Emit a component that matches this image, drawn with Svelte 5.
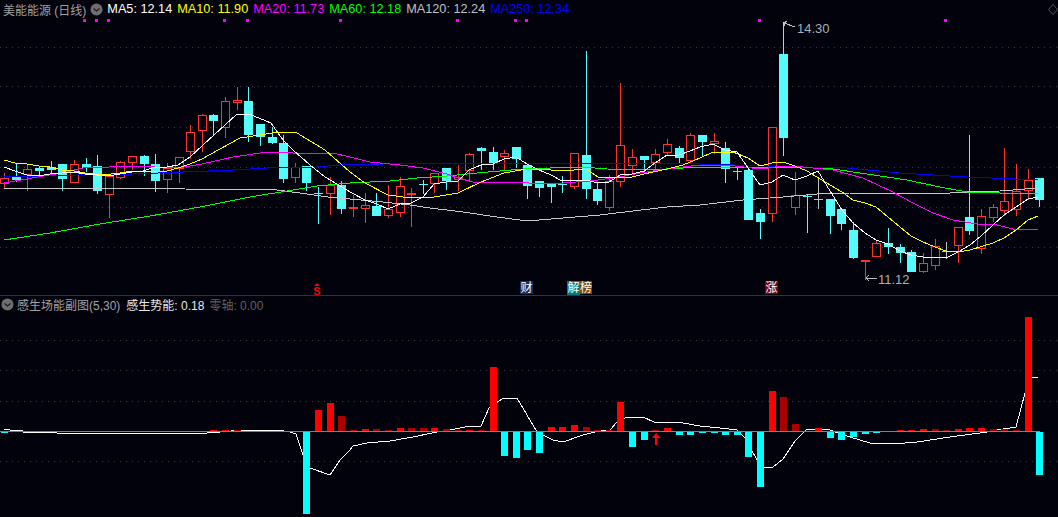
<script>
  // x pixel of the nth trading day
  const xAt = (i) => Math.floor(4.6 + i * 11.63)

  // [high, bodyTop, bodyBottom, low, kind]  r hollow, s solid red, c cyan, x cyan cross, g grey cross
  const candles = [
    [173,178,184,189,'r'],[163,176,180,182,'c'],[164,169,175,191,'r'],[167,168,171,175,'c'],[161,167,170,175,'c'],
    [164,164,179,191,'c'],[160,164,183,183,'r'],[158,164,168,172,'c'],[155,166,191,194,'c'],[174,176,195,218,'r'],
    [161,162,178,179,'r'],[156,156,163,170,'r'],[155,156,164,176,'c'],[154,164,181,192,'c'],[163,168,180,193,'r'],
    [157,157,169,183,'r'],[125,132,152,159,'r'],[114,115,131,152,'r'],[114,115,121,136,'c'],[97,101,128,138,'r'],
    [87,100,103,110,'r'],[87,101,135,142,'c'],[124,124,137,146,'c'],[127,137,143,144,'c'],[135,143,179,183,'c'],
    [163,167,178,183,'r'],[166,166,183,191,'c'],[187,193,193,224,'x'],[177,185,194,215,'r'],[181,185,209,214,'c'],
    [195,207,209,217,'r'],[193,205,209,223,'r'],[193,206,216,216,'c'],[185,209,216,218,'r'],[177,186,213,217,'r'],
    [188,193,195,227,'s'],[180,184,184,194,'x'],[173,173,184,193,'r'],[168,168,181,190,'c'],[165,177,180,191,'r'],
    [153,154,171,181,'r'],[147,148,151,170,'c'],[147,152,163,170,'c'],[150,153,157,170,'r'],[147,147,159,168,'c'],
    [163,165,186,199,'c'],[181,181,188,197,'c'],[184,184,187,203,'c'],[176,184,184,193,'x'],[153,153,187,189,'r'],
    [51,155,189,199,'c'],[182,189,201,205,'c'],[175,181,208,211,'r'],[83,145,182,187,'r'],[149,157,166,174,'r'],
    [156,156,160,172,'c'],[149,154,163,171,'r'],[139,144,153,156,'r'],[146,148,158,163,'c'],[133,135,161,163,'r'],
    [135,135,142,156,'c'],[133,141,144,154,'r'],[142,148,169,183,'c'],[165,171,171,180,'g'],[168,170,220,220,'c'],
    [209,213,222,239,'c'],[127,127,214,222,'r'],[22,54,138,156,'c'],[172,195,208,215,'r'],[194,196,196,233,'x'],
    [178,199,199,209,'g'],[199,199,216,234,'c'],[209,209,224,230,'c'],[222,230,258,259,'c'],[260,260,262,280,'s'],
    [240,243,257,257,'r'],[228,243,247,254,'c'],[244,247,253,263,'c'],[250,252,272,272,'c'],[253,263,272,273,'r'],
    [239,246,266,270,'r'],[242,251,251,259,'g'],[227,227,246,263,'r'],[135,217,231,235,'c'],[209,216,249,254,'r'],
    [204,207,218,222,'r'],[148,201,211,216,'r'],[164,191,210,216,'r'],[169,180,191,200,'r'],[178,178,200,207,'c']
  ]

  const lines = [
    { color: '#c8c8c8', pts: '4,188 138,188 185,189 277,190 300,193 328,197 350,199 383,202 410,205 430,208 463,212 490,216 527,221 563,218 600,215 633,211 667,207 700,205 743,200 783,197 817,194 850,193 950,193 967,192 1000,191 1038,188' },
    { color: '#00ff00', pts: '4,240 50,233 100,224 150,216 200,207 250,197 287,191 317,186 350,183 370,182 390,181 417,178 447,176 477,173 500,171 523,169 550,168 583,167 607,169 650,170 683,168 700,167 800,167 833,169 867,174 907,180 940,187 967,192 1000,193 1038,193' },
    { color: '#0000ff', pts: '4,177 77,175 133,174 183,172 233,170 267,168 317,167 350,164 383,164 417,163 683,163 700,164 800,167 847,168 900,173 967,177 1038,180' },
    { color: '#ff00ff', pts: '4,183 27,179 43,176 62,173 83,168 109,167 133,166 155,167 178,168 202,164 233,157 267,152 293,153 317,154 333,153 350,157 370,162 400,165 423,168 447,174 458,178 473,182 493,183 517,182 540,184 563,183 590,181 613,178 640,173 660,170 683,167 700,165 727,165 760,169 783,166 803,167 833,170 863,178 893,192 913,203 933,213 953,220 977,224 993,224 1017,230 1038,229' },
    { color: '#ffff00', pts: '4,160 15,163 27,164 39,166 50,167 62,170 74,171 85,173 95,174 103,175 120,173 132,171 143,171 155,171 167,171 178,168 190,164 202,159 220,149 240,138 260,135 278,132 297,133 325,150 350,172 365,183 388,195 411,198 434,197 458,193 481,182 504,173 527,169 551,170 562,171 586,169 598,177 620,178 632,177 644,174 667,169 683,165 700,158 713,152 733,152 748,158 760,166 772,163 783,162 795,166 807,171 830,185 842,192 853,200 865,203 876,207 888,217 900,227 911,236 923,242 935,247 946,251 958,252 970,250 993,243 1004,238 1016,230 1028,220 1038,216' },
    { color: '#ffffff', pts: '4,167 15,171 27,175 39,176 50,174 62,173 74,172 85,174 97,175 109,176 120,174 132,172 143,171 155,167 167,167 178,165 190,157 203,145 225,125 237,114 249,114 271,123 283,140 293,150 310,165 325,177 337,184 350,192 365,200 377,204 388,209 400,204 411,203 423,197 434,184 446,182 458,181 469,170 481,165 493,164 504,159 516,157 527,164 539,170 551,175 562,181 574,180 586,180 598,183 609,182 620,175 632,174 644,171 655,163 667,155 679,155 690,151 700,147 713,144 725,150 737,152 748,168 760,185 772,182 783,175 795,180 807,176 818,171 830,191 842,210 853,223 865,233 876,240 888,244 900,251 911,255 923,257 935,257 946,258 958,252 970,245 981,236 993,225 1004,215 1016,207 1028,199 1038,197' }
  ]

  const marks = [84, 96, 108, 224, 247, 340, 457, 515, 526, 759, 945]
  const topGrid = [47, 86, 127, 167, 207, 247]
  const subGrid = [340, 370, 401, 461]

  const zero = 431
  // [day, kind, end y]  r red, d dark red, c cyan
  const bars = [
    [0,'c',433],[1,'c',432],[2,'c',432],[3,'c',432],[9,'c',432],[18,'r',430],[19,'r',430],[20,'d',430],
    [23,'c',432],[24,'c',432],[25,'c',432],[26,'c',514],[27,'r',410],[28,'r',403],[29,'d',416],[30,'d',430],
    [31,'r',429],[32,'d',429],[33,'d',430],[34,'r',428],[35,'d',428],[36,'d',428],[37,'r',428],[38,'d',429],
    [39,'d',430],[40,'r',430],[41,'d',430],[42,'r',367],[43,'c',456],[44,'c',458],[45,'c',450],[46,'c',453],
    [47,'r',427],[48,'r',427],[49,'r',425],[50,'d',427],[51,'d',430],[52,'d',430],[53,'r',402],[54,'c',447],
    [55,'c',440],[56,'d',430],[57,'r',428],[58,'c',435],[59,'c',435],[60,'c',433],[61,'c',433],[62,'c',435],
    [63,'c',435],[64,'c',457],[65,'c',487],[66,'r',391],[67,'d',397],[68,'d',424],[70,'r',428],[71,'c',438],
    [72,'c',440],[73,'c',437],[74,'c',434],[75,'c',433],[77,'r',430],[78,'r',430],[79,'r',429],[80,'d',429],
    [81,'d',430],[82,'r',429],[83,'r',428],[84,'r',428],[85,'d',429],[86,'d',429],[87,'d',430],[88,'r',317],[89,'c',475]
  ]
  const barColor = { r: '#ff0000', d: '#aa0000', c: '#00ffff' }

  const energy = '4,429 10,430 22,430 23,432 43,432 57,433 207,433 220,432 243,430 278,430 290,432 296,434 303,455 310,468 330,475 340,460 350,450 353,446 367,443 390,441 413,437 437,432 450,430 465,427 481,426 489,408 502,399 517,398 527,415 537,432 553,440 563,442 583,435 595,432 603,430 610,430 617,422 625,418 643,417 654,422 683,423 700,426 720,428 737,430 745,438 757,460 763,468 773,467 783,459 795,441 807,429 827,429 838,433 850,437 870,443 893,444 917,442 950,437 987,432 997,430 1016,427 1025,393 1032,378 1038,377'

  const legend = [
    { label: 'MA5: 12.14', color: '#ffffff' },
    { label: 'MA10: 11.90', color: '#ffff00' },
    { label: 'MA20: 11.73', color: '#ff00ff' },
    { label: 'MA60: 12.18', color: '#00ff00' },
    { label: 'MA120: 12.24', color: '#c0c0c0' },
    { label: 'MA250: 12.34', color: '#0000ff' }
  ]
</script>

<div class="screen">
  <svg class="chart" width="1058" height="517" viewBox="0 0 1058 517">
    {#each topGrid as y}
      <line class="grid" x1="0" x2="1058" y1={y + 0.5} y2={y + 0.5} />
    {/each}
    {#each subGrid as y}
      <line class="grid" x1="0" x2="1058" y1={y + 0.5} y2={y + 0.5} />
    {/each}
    <rect class="divider" x="0" y="295" width="1058" height="1" />

    {#each marks as x}
      <rect class="mark" x={x - 1} y="19" width="3" height="3" />
    {/each}

    {#each candles as [high, top, bottom, low, kind], i}
      {@const x = xAt(i)}
      {#if kind === 'c'}
        <rect class="cyan" x={x} y={high} width="1" height={low - high} />
        <rect class="cyan" x={x - 4} y={top} width="9" height={bottom - top} />
      {:else if kind === 'x' || kind === 'g'}
        <rect class={kind === 'x' ? 'cyan' : 'grey'} x={x} y={high} width="1" height={low - high} />
        <rect class={kind === 'x' ? 'cyan' : 'grey'} x={x - 4} y={top} width="9" height="1" />
      {:else if kind === 's'}
        <rect class="red" x={x} y={high} width="1" height={low - high} />
        <rect class="red" x={x - 4} y={top} width="9" height={bottom - top} />
      {:else}
        <rect class="red" x={x} y={high} width="1" height={top - high} />
        <rect class="red" x={x} y={bottom} width="1" height={low - bottom} />
        <rect class="hollow" x={x - 3.5} y={top + 0.5} width="8" height={bottom - top - 1} />
      {/if}
    {/each}

    {#each lines as line}
      <polyline class="ma" stroke={line.color} points={line.pts} />
    {/each}

    <!-- high / low callouts -->
    <polyline class="callout" points="784,26 784,23 795,27" />
    <polyline class="callout" points="784,23 787,21" />
    <text class="price" x="797" y="33">14.30</text>
    <polyline class="callout" points="869,275 866,278 869,281" />
    <line class="callout" x1="866" y1="278" x2="877" y2="278" />
    <text class="price" x="878" y="284">11.12</text>

    <!-- event tags -->
    <polygon class="redfill" points="317,283 314,286 320,286" />
    <text class="tag s" x="317" y="295">S</text>
    <rect x="520" y="281" width="13" height="13" fill="#0a3264" />
    <text class="tag" x="526.5" y="292">财</text>
    <rect x="567" y="281" width="13" height="14" fill="#0a7878" />
    <text class="tag" x="573.5" y="292">解</text>
    <rect x="580" y="281" width="12" height="13" fill="#7c420a" />
    <text class="tag" x="586" y="292">榜</text>
    <rect x="765" y="281" width="13" height="13" fill="#780404" />
    <text class="tag" x="771.5" y="292">涨</text>

    <polyline class="energy" points={energy} />
    {#each bars as [i, kind, y]}
      {#if kind === 'c'}
        <rect x={xAt(i) - 3} y={zero + 1} width="7" height={y - zero - 1} fill={barColor[kind]} />
      {:else}
        <rect x={xAt(i) - 3} y={y} width="7" height={zero - y} fill={barColor[kind]} />
      {/if}
    {/each}
    <rect class="axis" x="0" y={zero} width="1040" height="1" />
    <polygon class="redfill" points="656,433 652,438 655,438 655,445 657,445 657,438 661,438" />

    <polygon class="diamond" points="1053,4.5 1057.5,9.5 1053,14.5 1048.5,9.5" />
  </svg>

  <div class="legend top">
    <span class="title">美能能源 (日线)</span>
    <svg class="toggle" width="13" height="13" viewBox="0 0 13 13">
      <circle cx="6.5" cy="6.5" r="6" fill="#6e6e6e" />
      <polyline points="3.5,5.5 6.5,8 9.5,5.5" fill="none" stroke="#1c1c1c" stroke-width="1.2" />
    </svg>
    {#each legend as item}
      <span class="ma-item" style="color: {item.color}">{item.label}</span>
    {/each}
  </div>

  <div class="legend sub">
    <svg class="toggle" width="13" height="13" viewBox="0 0 13 13">
      <circle cx="6.5" cy="6.5" r="6" fill="#6e6e6e" />
      <polyline points="3.5,5.5 6.5,8 9.5,5.5" fill="none" stroke="#1c1c1c" stroke-width="1.2" />
    </svg>
    <span class="title">感生场能副图(5,30)</span>
    <span class="value">感生势能: 0.18</span>
    <span class="zero">零轴: 0.00</span>
  </div>
</div>

<style>
  :global(body) {
    background: #02020c;
  }

  .screen {
    position: relative;
    width: 1058px;
    height: 517px;
    overflow: hidden;
    background: #02020c;
    font-family: "Liberation Sans", "Noto Sans CJK SC", sans-serif;
    font-size: 12px;
  }

  .chart {
    display: block;
  }

  .grid {
    stroke: #3c3c3c;
    stroke-width: 1;
    stroke-dasharray: 1 5;
  }

  .divider {
    fill: #333333;
  }

  .mark {
    fill: #ff00ff;
  }

  .cyan {
    fill: #54fcfc;
  }

  .grey {
    fill: #c0c0c0;
  }

  .red {
    fill: #ff3232;
  }

  .redfill {
    fill: #ff0000;
  }

  .hollow {
    fill: none;
    stroke: #ff3232;
    stroke-width: 1;
    shape-rendering: crispEdges;
  }

  .ma {
    fill: none;
    stroke-width: 1;
    shape-rendering: crispEdges;
  }

  .energy {
    fill: none;
    stroke: #ffffff;
    stroke-width: 1;
    shape-rendering: crispEdges;
  }

  .axis {
    fill: #808080;
  }

  .callout {
    fill: none;
    stroke: #c0c0c0;
    stroke-width: 1;
    shape-rendering: crispEdges;
  }

  .price {
    fill: #a8b0b8;
    font-size: 13px;
  }

  .tag {
    fill: #ffffff;
    font-size: 12px;
    text-anchor: middle;
  }

  .tag.s {
    fill: #ff0000;
    font-weight: bold;
    font-size: 11px;
  }

  .diamond {
    fill: none;
    stroke: #555555;
    stroke-width: 1;
  }

  .legend {
    position: absolute;
    display: flex;
    align-items: center;
    height: 18px;
    gap: 5px;
    white-space: nowrap;
  }

  .legend.top {
    left: 3px;
    top: 0;
  }

  .legend.sub {
    left: 1px;
    top: 295px;
  }

  .toggle {
    flex: none;
  }

  .top .title {
    margin-right: -1px;
  }

  .top .toggle {
    margin-right: -1px;
  }

  .ma-item {
    font-size: 12.7px;
  }

  .sub .toggle {
    margin-right: -2px;
  }

  .title {
    color: #a0a0a0;
  }

  .value {
    color: #e8e8e8;
    margin-left: 1px;
  }

  .zero {
    color: #606060;
  }
</style>
